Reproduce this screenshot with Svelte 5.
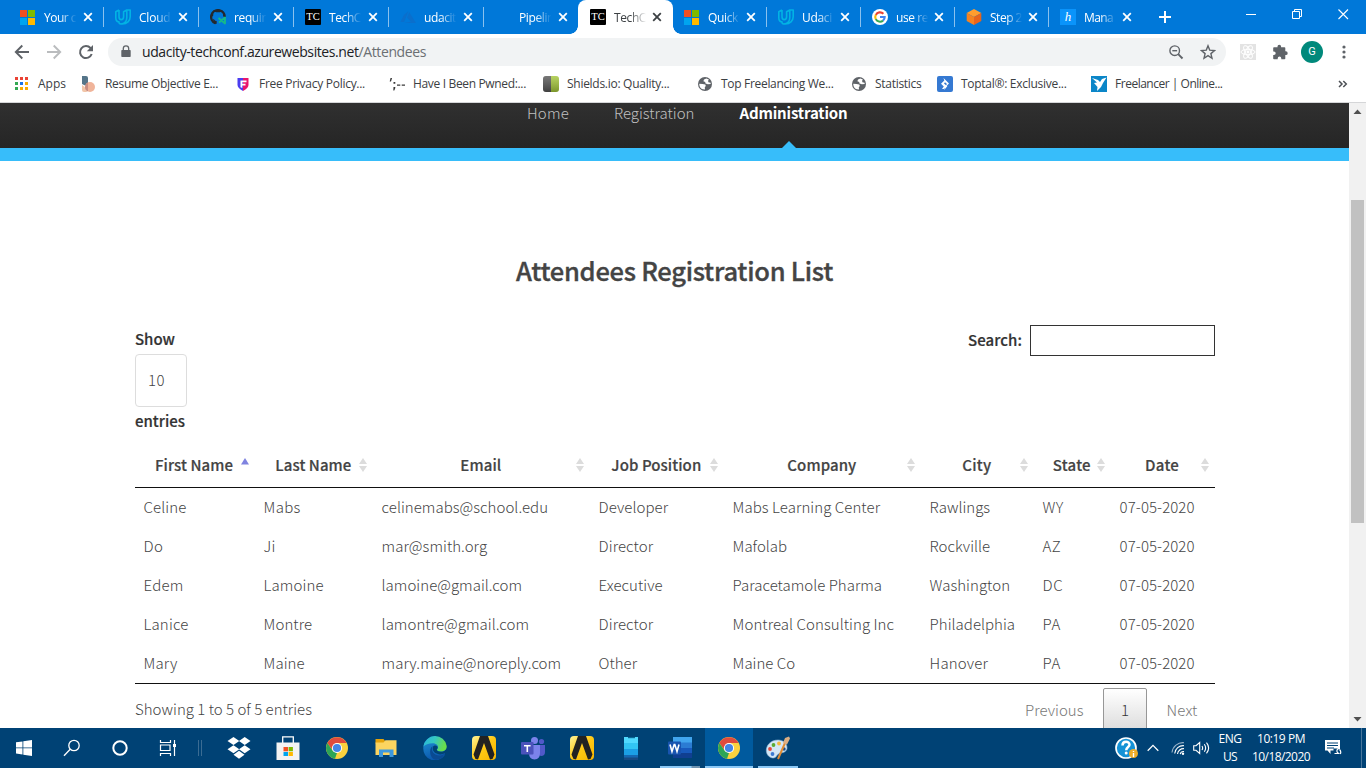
<script>
  // Spreads the glyphs of a label evenly over the given width.
  function fit(node, width) {
    const apply = (w) => {
      if (!w) return;
      node.style.letterSpacing = '0px';
      const natural = node.getBoundingClientRect().width;
      node.style.letterSpacing = (w - natural) / node.textContent.length + 'px';
    };
    apply(width);
    return { update: apply };
  }

  const tabs = [
    { icon: 'ms', text: 'Your c', w: 32, size: 95 },
    { icon: 'udacity', text: 'Cloud', w: 31.5, size: 95 },
    { icon: 'github', text: 'requir', w: 32, size: 95 },
    { icon: 'tc', text: 'TechC', w: 32, size: 95 },
    { icon: 'azure', text: 'udacit', w: 32, size: 95 },
    { icon: '', text: 'Pipelin', w: 35, size: 95 },
    { icon: 'tc', text: 'TechC', w: 32, size: 94.5, active: true },
    { icon: 'ms', text: 'Quick', w: 30, size: 93.5 },
    { icon: 'udacity', text: 'Udaci', w: 30, size: 94 },
    { icon: 'google', text: 'use re', w: 32, size: 94 },
    { icon: 'cube', text: 'Step 2', w: 32, size: 94 },
    { icon: 'honey', text: 'Mana', w: 29, size: 94 }
  ];

  const bookmarks = [
    { icon: 'apps', text: 'Apps', w: 28, size: 68 },
    { icon: 'resume', text: 'Resume Objective E...', w: 113, size: 154 },
    { icon: 'privacy', text: 'Free Privacy Policy...', w: 106, size: 154 },
    { icon: 'pwned', text: 'Have I Been Pwned:...', w: 113, size: 154 },
    { icon: 'shields', text: 'Shields.io: Quality...', w: 102.5, size: 154 },
    { icon: 'globe', text: 'Top Freelancing We...', w: 112.5, size: 154 },
    { icon: 'globe', text: 'Statistics', w: 46.5, size: 86 },
    { icon: 'toptal', text: 'Toptal®: Exclusive...', w: 105.5, size: 154 },
    { icon: 'freelancer', text: 'Freelancer | Online...', w: 107.5, size: 154 }
  ];

  const columns = [
    { name: 'First Name', w: 78, size: 120.6 },
    { name: 'Last Name', w: 76, size: 118 },
    { name: 'Email', w: 41, size: 217 },
    { name: 'Job Position', w: 90, size: 134 },
    { name: 'Company', w: 69, size: 197 },
    { name: 'City', w: 29, size: 113 },
    { name: 'State', w: 38, size: 77 },
    { name: 'Date', w: 34, size: 103.4 }
  ];

  const rows = [
    [['Celine', 43], ['Mabs', 37], ['celinemabs@school.edu', 166.5], ['Developer', 69.5], ['Mabs Learning Center', 147.5], ['Rawlings', 60.5], ['WY', 21], ['07-05-2020', 75]],
    [['Do', 20], ['Ji', 12], ['mar@smith.org', 105.5], ['Director', 54.5], ['Mafolab', 54.5], ['Rockville', 60.5], ['AZ', 18.5], ['07-05-2020', 75]],
    [['Edem', 40], ['Lamoine', 60], ['lamoine@gmail.com', 140.5], ['Executive', 64], ['Paracetamole Pharma', 149.5], ['Washington', 80.5], ['DC', 20.5], ['07-05-2020', 75]],
    [['Lanice', 45], ['Montre', 48.5], ['lamontre@gmail.com', 147.5], ['Director', 54.5], ['Montreal Consulting Inc', 161.5], ['Philadelphia', 85.5], ['PA', 18.5], ['07-05-2020', 75]],
    [['Mary', 34], ['Maine', 41], ['mary.maine@noreply.com', 179.5], ['Other', 38.5], ['Maine Co', 62.5], ['Hanover', 58.5], ['PA', 18.5], ['07-05-2020', 75]]
  ];

  const system = ['start', 'search', 'cortana', 'taskview'];
  const pinned = [
    { icon: 'dropbox' }, { icon: 'store' }, { icon: 'chrome' }, { icon: 'explorer' },
    { icon: 'edge' }, { icon: 'arrowA' }, { icon: 'teams' }, { icon: 'arrowA' },
    { icon: 'phone' }, { icon: 'word', state: 'stacked' }, { icon: 'chrome', state: 'focused' },
    { icon: 'paint', state: 'open' }
  ];
</script>

{#snippet icon(name, s = 16)}
  {#if name === 'ms'}
    <svg width={s} height={s} viewBox="0 0 16 16"><path fill="#f25022" d="M0 1h7v7H0z"/><path fill="#7fba00" d="M8 1h7v7H8z"/><path fill="#00a4ef" d="M0 9h7v7H0z"/><path fill="#ffb900" d="M8 9h7v7H8z"/></svg>
  {:else if name === 'udacity'}
    <svg width={s} height={s} viewBox="0 0 16 16" fill="none" stroke="#02b3e4" stroke-width="1.6" stroke-linejoin="round"><path d="M4 1 .8 2.700v6.300c0 2.400 1.500 3.900 3.700 3.900M4 1v6.800c0 1.700.7 2.800 2.200 2.800s2.400-1.100 2.400-2.800V2.700L11.800 1v7.400c0 3.700-2.200 6.200-6 6.600-1.500-.2-2-1-2-2.200M11.800 1h3.400v6.800c0 4-3.200 7-8 7.200"/></svg>
  {:else if name === 'github'}
    <svg width={s} height={s} viewBox="0 0 16 16"><path fill="none" stroke="#24292e" stroke-width="2.400" d="M5.300 14.200A6.800 6.800 0 1 1 14.800 8"/><path fill="#24292e" d="M3.300 6.500Q2.700 3.500 4 2.200l2.300 1h3.500l2.300-1Q13.500 3.500 13 6.500L14.500 8l.5-3-3-4H4L1.500 4v4zM3 10q1.200 0 2 1.600.8.700 1.700.2v2.700l-1 .8L3.500 13z"/><path fill="none" stroke="#16b88a" stroke-width="1.900" stroke-linejoin="round" d="m8.500 9 6.500 5.500v-6L9 13.500"/></svg>
  {:else if name === 'azure'}
    <svg width={s} height={s} viewBox="0 0 16 16" fill="#0a6fcc"><path d="M8.500 2 4 5.800.5 13h3.600zM9.200 3 7.100 8.500l3.800 4.200-7 1.300h12z"/></svg>
  {:else if name === 'tc'}
    <span class="tc">TC</span>
  {:else if name === 'google'}
    <svg width={s} height={s} viewBox="0 0 16 16"><circle cx="8" cy="8" r="8" fill="#fff"/><g fill="none" stroke-width="2.100"><path stroke="#ea4335" d="M3.800 5.900A4.700 4.700 0 0 1 11.400 4.800"/><path stroke="#fbbc05" d="M3.800 5.800a4.700 4.700 0 0 0 0 4.400"/><path stroke="#34a853" d="M3.800 10.100a4.700 4.700 0 0 0 7.200 1.500"/><path stroke="#4285f4" d="M8 8h4.700a4.700 4.700 0 0 1-1.700 3.600"/></g></svg>
  {:else if name === 'cube'}
    <svg width={s} height={s} viewBox="0 0 16 16"><path fill="#ff9d2e" d="m8 0 7.300 4L8 8 .7 4z"/><path fill="#f58220" d="M.7 4 8 8v8L.7 12z"/><path fill="#e8641b" d="M15.300 4 8 8v8l7.300-4z"/></svg>
  {:else if name === 'honey'}
    <span class="honey">h</span>
  {:else if name === 'apps'}
    <svg width="16" height="16" viewBox="0 0 16 16"><path fill="#ea4335" d="M2 1h3v3H2zM7 1h3v3H7zM12 1h3v3h-3z"/><path fill="#34a853" d="M2 6h3v3H2zM2 11h3v3H2z"/><path fill="#1a73e8" d="M7 6h3v3H7z"/><path fill="#f9ab00" d="M12 6h3v3h-3zM7 11h3v3H7zM12 11h3v3h-3z"/></svg>
  {:else if name === 'resume'}
    <svg width="16" height="16" viewBox="0 0 16 16"><path fill="#557589" d="M1 0h4q2 0 2 2v9l-6-3z"/><path fill="#f1c5a8" d="M1 9q4 2 5 7H3q-2 0-2-2z"/><circle cx="9" cy="11" r="5" fill="#f0b49a"/><path fill="#c78e83" d="M5 8q1-1 2-1.500v9Q4 14 4 11z"/></svg>
  {:else if name === 'privacy'}
    <svg width="16" height="16" viewBox="0 0 16 16"><path fill="#4b3df0" d="M2.500 2h5.500v13Q2.500 12 2.500 9z"/><path fill="#e9156b" d="M8 2h5.500v7q0 3-5.500 6z"/><path fill="#fff" d="M5.500 4.500h6v1.700H7.300v1.600h3.200v1.700H7.300V12l-1.800-.8z"/></svg>
  {:else if name === 'pwned'}
    <svg width="17" height="16" viewBox="0 0 17 16" fill="#3a3a3a"><path d="M1.500 2h1.600L2 5.500H.7zM4.500 6h1.800v1.800H4.500zM4.500 11h1.800v1l-1 2.500H4.300zM8 8.500h3.300v1.300H8zM12.700 8.500H16v1.300h-3.300z"/></svg>
  {:else if name === 'shields'}
    <svg width="16" height="16" viewBox="0 0 16 16"><defs><linearGradient id="sh" x2="0" y2="1"><stop stop-color="#fff" stop-opacity=".2"/><stop offset="1" stop-opacity=".25"/></linearGradient></defs><path fill="#555" d="M3 0h5v16H3q-3 0-3-3V3q0-3 3-3"/><path fill="#a4c639" d="M8 0h5q3 0 3 3v10q0 3-3 3H8z"/><rect width="16" height="16" rx="3" fill="url(#sh)"/></svg>
  {:else if name === 'globe'}
    <svg width="16" height="16" viewBox="0 0 16 16"><circle cx="8" cy="8" r="7" fill="#5f6368"/><path fill="#fff" d="M2.300 7.800 5.600 8l2.700.5.5 1.400-1 1.300.2 2.300Q3 13.500 2.300 9zM9.300 2.500 7 3.500l-.6 1.800 1.800.6.3 1.500 2.300.8 2.900-.2-.1-1.300-2.200-.4-.3-1.500.8-1.400z"/></svg>
  {:else if name === 'toptal'}
    <svg width="16" height="16" viewBox="0 0 16 16"><rect width="16" height="16" rx="2" fill="#3579d2"/><path fill="#fff" d="m6.500 2 5.500 5.500L6.700 13H5l1.800-2.500L4 7.800l3.300-3.200zM7 7.500 9 9.300l1-1.200-2-1.800zM8 11l1.500-1.500.8.800L7.200 14z"/></svg>
  {:else if name === 'freelancer'}
    <svg width="16" height="16" viewBox="0 0 16 16"><path fill="#0b86c8" d="M0 0h16v16H0z"/><path fill="#fff" d="m1 2 6 2 2 2 2-3 4.500-1.500L12 7l-2 4-4 4 .5-4L3 7l3-.5z"/></svg>
  {:else if name === 'start'}
    <svg width="16" height="16" viewBox="0 0 16 16" fill="#fff"><path d="m0 2.300 6.500-.9v6.100H0zM7.300 1.300 16 0v7.500H7.300zM0 8.300h6.500v6.200L0 13.600zM7.300 8.300H16V16l-8.700-1.300z"/></svg>
  {:else if name === 'search'}
    <svg width="18" height="18" viewBox="0 0 18 18" fill="none" stroke="#fff" stroke-width="1.300"><circle cx="11" cy="6.500" r="5.200"/><path d="m7.200 10.300-6.200 6.500"/></svg>
  {:else if name === 'cortana'}
    <svg width="18" height="18" viewBox="0 0 18 18" fill="none" stroke="#fff" stroke-width="2"><circle cx="9" cy="9" r="6.700"/></svg>
  {:else if name === 'taskview'}
    <svg width="18" height="16" viewBox="0 0 18 16" fill="none" stroke="#fff" stroke-width="1.200"><path d="M1.500 0v2.500h10V0M1.500 16v-2.500h10V16M1.500 5h9.500v5.500H1.500zM15.500 0v16"/><path fill="#fff" stroke="none" d="M14 4h3v3h-3z"/></svg>
  {:else if name === 'dropbox'}
    <svg width="24" height="24" viewBox="0 0 24 24" fill="#fff"><path d="m6.500 1 5.800 4-5.800 4L.5 5zM17.700 1l5.800 4-5.800 4-5.700-4zM6.500 9.300l5.800 4-5.800 4-6-4zM17.700 9.300l5.800 4-5.800 4-5.700-4zM12 14.700l5.500 4-5.500 4-5.500-4z"/></svg>
  {:else if name === 'store'}
    <svg width="24" height="24" viewBox="0 0 24 24"><path fill="none" stroke="#fff" stroke-width="1.300" d="M6.700 7V.8h10.600V7"/><path fill="#f3f3f3" d="M.5 6.500h23V24H.5z"/><path fill="#f25022" d="M7.500 11H12v4.300H7.500z"/><path fill="#7fba00" d="M12.600 11h4.300v4.300h-4.300z"/><path fill="#00a4ef" d="M7.500 16H12v4H7.500z"/><path fill="#ffb900" d="M12.600 16h4.300v4h-4.300z"/></svg>
  {:else if name === 'chrome'}
    <svg width="24" height="24" viewBox="0 0 24 24"><circle cx="12" cy="12" r="11" fill="#fbd23e"/><path fill="#df4b3e" d="M2.300 6.900A11 11 0 0 1 21.600 7H12l-4.500 7z"/><path fill="#2da556" d="M2.300 6.900 7.600 14.500 12 17l-2 5.800A11 11 0 0 1 2.300 6.900"/><circle cx="12" cy="12" r="5.100" fill="#fff"/><circle cx="12" cy="12" r="4.100" fill="#4285e8"/></svg>
  {:else if name === 'explorer'}
    <svg width="24" height="24" viewBox="0 0 24 24"><path fill="#e5a30b" d="M1.500 3h8l2 2.500-2 2h-8z"/><path fill="#fbd460" d="M1.500 6.500h8l2-2.200h11V19h-21z"/><path fill="#3d99dd" d="M5 13.500h14.500V21h-4v-4.500H9V21H5z"/></svg>
  {:else if name === 'edge'}
    <svg width="24" height="24" viewBox="0 0 24 24"><defs><linearGradient id="eg" x1="0" y1="0" x2="1" y2=".3"><stop stop-color="#29b5dc"/><stop offset=".5" stop-color="#35c8c2"/><stop offset="1" stop-color="#69dc4b"/></linearGradient><linearGradient id="eb" x2=".3" y2="1"><stop stop-color="#2196d8"/><stop offset="1" stop-color="#0b58ad"/></linearGradient></defs><path fill="url(#eb)" d="M.3 12A11.700 11.700 0 0 1 12 .3L22 14l-.5 5.500A11.700 11.700 0 0 1 .3 12"/><path fill="url(#eg)" d="M.5 10.500A11.700 11.700 0 0 1 23.700 10c.3 4-2.700 5.500-5.700 5.500-2.500 0-4-.8-4-1.800 0-.6 1-1 1-2.800 0-2-2.500-3.700-5.300-3.700C5.500 7.200 2 8.600.5 10.500"/><path fill="#0a4a92" d="M9.500 10c-2 5 2 9.500 6.500 9.500 2.300 0 4-.7 5.500-1.500C19 23 15 23.800 12.500 23.700 6.500 22.500 5.500 13 9.500 10"/><path fill="#004275" d="M12 9.600c1.800 0 2.700 1 2.600 2.200-.1 1-.8 1.300-.8 2 0 1 1.700 2 4.200 2 2 0 3.600-.5 5.500-2-.4 3.500-2.900 4.600-6.200 4.600-4 0-7.600-2.500-7.600-5.800 0-1.800.9-3 2.300-3"/></svg>
  {:else if name === 'arrowA'}
    <svg width="24" height="24" viewBox="0 0 24 24"><defs><linearGradient id="ya" x2="1" y2="1"><stop stop-color="#fff49a"/><stop offset=".5" stop-color="#ffc915"/><stop offset="1" stop-color="#f7b500"/></linearGradient></defs><rect width="24" height="24" rx="4" fill="url(#ya)"/><path fill="#222" d="M8 0h8l6.500 18.500L20.500 23l-2.500.5L12 7 6 23.500 3.500 23l-2-4.500z"/></svg>
  {:else if name === 'teams'}
    <svg width="24" height="24" viewBox="0 0 24 24"><circle cx="20.500" cy="5.500" r="2.600" fill="#5059c9"/><path fill="#5059c9" d="M16 9h8v7q0 4-4 4-2 0-4-3z"/><circle cx="13.500" cy="4.500" r="3.500" fill="#7b83eb"/><path fill="#7b83eb" d="M8 9h11v8q0 6-5.500 6.500Q8 23 8 17z"/><rect y="6" width="12.500" height="12.500" rx="1" fill="#4b53bc"/><path fill="#fff" d="M3 9h6.600v1.500H7.100V16H5.500v-5.500H3z"/></svg>
  {:else if name === 'phone'}
    <svg width="24" height="24" viewBox="0 0 24 24"><path fill="#50d9ff" d="M5 1h14v6H5z"/><path fill="#32c5f4" d="M5 7h14v6H5z"/><path fill="#1b9fe5" d="M5 13h14v6H5z"/><path fill="#1568b2" d="M5 19h14v3H5z"/><path fill="#174a82" d="M5 21.500h14V24H5z"/><path fill="#0a6592" d="M9 1h7v1.200H9z"/></svg>
  {:else if name === 'word'}
    <svg width="24" height="24" viewBox="0 0 24 24"><path fill="#41a5ee" d="M5 1h19v6H5z"/><path fill="#2b7cd3" d="M5 6.500h19V12H5z"/><path fill="#185abd" d="M5 12h19v5H5z"/><path fill="#103f91" d="M5 17h19v5H5z"/><rect y="5.500" width="13" height="13" rx="1" fill="#1854b0"/><path fill="none" stroke="#fff" stroke-width="1.600" d="m2 8.500 2 7 2.200-7h.6l2.200 7 2-7"/></svg>
  {:else if name === 'paint'}
    <svg width="26" height="24" viewBox="0 0 26 24"><path fill="#d4e7f5" stroke="#8db6d5" stroke-width=".6" d="M13 4C5 4 1 10 1.300 15c.3 4.500 4 7 7 7 3.500 0 3-3.500 6-4.500 3-1 7-1 7.700-5C22.500 7.500 18 4 13 4"/><circle cx="5" cy="13" r="1.900" fill="#e44b3c"/><circle cx="8.500" cy="9" r="1.900" fill="#5aab33"/><circle cx="14" cy="7.500" r="1.900" fill="#f5b83d"/><circle cx="7.500" cy="18" r="1.900" fill="#3e7bd1"/><circle cx="19" cy="13" r="1.700" fill="#234c82"/><path stroke="#e08b33" stroke-width="2" d="M13 23 20 7"/><path fill="#dcae82" d="m18 7 2-5 4-1.500 1 2-3 6z"/></svg>
  {/if}
{/snippet}

<div class="screen">
  <div class="tabbar">
    {#each tabs as tab, i}
      <div class="tab" class:active={tab.active} class:nosep={i === 0 || tab.active || tabs[i - 1]?.active} style:width="{tab.size}px">
        <span class="fav">{@render icon(tab.icon)}</span>
        <span class="tabtext"><span use:fit={tab.w}>{tab.text}</span></span>
        <svg class="close" width="10" height="10" viewBox="0 0 10 10"><path d="m1.200 1.200 7.600 7.600m0-7.600L1.200 8.800" fill="none" stroke="currentColor" stroke-width="1.800"/></svg>
      </div>
    {/each}
    <div class="newtab"><svg width="12" height="12" viewBox="0 0 12 12"><path d="M6 0v12M0 6h12" stroke="#fff" stroke-width="2"/></svg></div>
    <div class="wincontrols">
      <svg width="46" height="28" viewBox="0 0 46 28" fill="none" stroke="#fff"><path d="M17 14.500h10"/></svg>
      <svg width="46" height="28" viewBox="0 0 46 28" fill="none" stroke="#fff"><path d="M17.500 11.500h7v7h-7zM19.500 11V9.500h7v7H25"/></svg>
      <svg width="46" height="28" viewBox="0 0 46 28" fill="none" stroke="#fff" stroke-width="1.100"><path d="m17.500 9.500 9.500 9.500m0-9.500L17.500 19"/></svg>
    </div>
  </div>

  <div class="toolbar">
    <span class="tool"><svg width="16" height="16" viewBox="0 0 16 16" fill="none" stroke="#5f6368" stroke-width="1.900"><path d="M15 8H2.500M8.300 1.500 1.800 8l6.500 6.500"/></svg></span>
    <span class="tool"><svg width="16" height="16" viewBox="0 0 16 16" fill="none" stroke="#babcbe" stroke-width="1.900"><path d="M1 8h12.500M7.700 1.500 14.200 8l-6.500 6.500"/></svg></span>
    <span class="tool"><svg width="16" height="16" viewBox="0 0 16 16" fill="none" stroke="#5f6368" stroke-width="2"><path d="M13.700 10A6 6 0 1 1 12.500 4L14 5.500"/><path fill="#5f6368" stroke="none" d="M15 1v6.200H8.800z"/></svg></span>
    <div class="omnibox">
      <svg class="lock" width="10" height="14" viewBox="0 0 10 14"><path fill="#5f6368" d="M1 5h8q.7 0 .7.700v5.600q0 .7-.7.700H1q-.7 0-.7-.7V5.700Q.3 5 1 5"/><path fill="none" stroke="#5f6368" stroke-width="1.300" d="M2.300 5V3.500a2.700 2.700 0 0 1 5.400 0V5"/></svg>
      <span class="url"><span use:fit={216.5}>udacity-techconf.azurewebsites.net</span><span class="path" use:fit={67.5}>/Attendees</span></span>
      <span class="tool end"><svg width="16" height="16" viewBox="0 0 16 16" fill="none" stroke="#5f6368" stroke-width="1.400"><circle cx="6.700" cy="6.700" r="4.800"/><path d="M4.300 6.700h4.800"/><path stroke-width="1.900" d="m10.200 10.200 4.300 4.300"/></svg></span>
      <span class="tool"><svg width="16" height="16" viewBox="0 0 16 16" fill="none" stroke="#5f6368" stroke-width="1.400"><path d="m8 1.800 1.700 4.300 4.800.4-3.600 3.100 1.100 4.700L8 11.700l-4 2.600 1.100-4.700L1.500 6.500l4.800-.4z"/></svg></span>
    </div>
    <span class="tool first"><svg width="16" height="16" viewBox="0 0 16 16"><path fill="#e3e3e3" d="M0 0h16v16H0z"/><g fill="none" stroke="#fff" stroke-width="1"><ellipse cx="8" cy="8" rx="7" ry="2.700"/><ellipse cx="8" cy="8" rx="7" ry="2.700" transform="rotate(60 8 8)"/><ellipse cx="8" cy="8" rx="7" ry="2.700" transform="rotate(120 8 8)"/></g><circle cx="8" cy="8" r="1.400" fill="#fff"/></svg></span>
    <span class="tool"><svg width="16" height="16" viewBox="0 0 16 16" fill="#5f6368"><path d="M2 3.200h3.500V2.500a1.800 1.800 0 0 1 3.600 0v.7h3.400q.8 0 .8.800v3.300h.5a1.900 1.900 0 0 1 0 3.800h-.5v3.300q0 .8-.8.800H9.300v-.8a1.800 1.800 0 0 0-3.600 0v.8H2q-.8 0-.8-.8v-3.300h.7a1.800 1.800 0 0 0 0-3.600h-.7V4q0-.8.8-.8"/></svg></span>
    <span class="tool"><span class="avatar">G</span></span>
    <span class="tool"><svg width="4" height="14" viewBox="0 0 4 14" fill="#5f6368"><circle cx="2" cy="2" r="1.600"/><circle cx="2" cy="7" r="1.600"/><circle cx="2" cy="12" r="1.600"/></svg></span>
  </div>

  <div class="bookmarks">
    {#each bookmarks as b, i}
      <div class="bookmark" style:width="{b.size}px">
        <span class="fav" class:wide={i === 0}>{@render icon(b.icon)}</span>
        <span class="btext" use:fit={b.w}>{b.text}</span>
      </div>
    {/each}
    <svg class="more" width="10" height="8" viewBox="0 0 10 8" fill="none" stroke="#4d5156" stroke-width="1.500"><path d="m1 1 3 3-3 3M5.300 1l3 3-3 3"/></svg>
  </div>

  <div class="viewport">
    <main>
      <nav>
        <a class="home" href="#home"><span use:fit={42}>Home</span></a>
        <a class="reg" href="#registration"><span use:fit={80.5}>Registration</span></a>
        <a class="current" href="#administration"><span use:fit={108}>Administration</span></a>
      </nav>
      <div class="band"></div>
      <h1><span use:fit={317}>Attendees Registration List</span></h1>
      <section>
        <div class="controls">
          <div class="length">
            <span class="lab"><span use:fit={40}>Show</span></span>
            <span class="select"><span use:fit={17}>10</span></span>
            <span class="lab low"><span use:fit={50}>entries</span></span>
          </div>
          <label class="search"><span class="lift" use:fit={54}>Search:</span><input type="text" /></label>
        </div>
        <table>
          <colgroup>{#each columns as c}<col style:width="{c.size}px" />{/each}</colgroup>
          <thead>
            <tr>
              {#each columns as c, i}
                <th><div class="head"><span class="name"><span use:fit={c.w}>{c.name}</span></span>
                  <svg width="8" height="14" viewBox="0 0 8 14">
                    {#if i === 0}<path fill="#7f83e0" d="M4 0 8 6.500H0z"/>{:else}<path fill="#dcdcdc" d="M4 0 8 6H0zM0 8h8l-4 6z"/>{/if}
                  </svg></div></th>
              {/each}
            </tr>
          </thead>
          <tbody>
            {#each rows as row}
              <tr>{#each row as [text, w]}<td><span use:fit={w}>{text}</span></td>{/each}</tr>
            {/each}
          </tbody>
        </table>
        <div class="footer">
          <span class="info"><span use:fit={177}>Showing 1 to 5 of 5 entries</span></span>
          <span class="page muted prev"><span use:fit={58.5}>Previous</span></span>
          <span class="page here">1</span>
          <span class="page muted next"><span use:fit={31}>Next</span></span>
        </div>
      </section>
    </main>
    <div class="scrollbar">
      <svg width="17" height="17" viewBox="0 0 17 17"><path fill="#505050" d="M4.500 11h8l-4-4.500z"/></svg>
      <div class="thumb"></div>
      <svg class="down" width="17" height="17" viewBox="0 0 17 17"><path fill="#505050" d="M4.500 6h8l-4 4.500z"/></svg>
    </div>
  </div>

  <div class="taskbar">
    {#each system as s}<span class="sys">{@render icon(s)}</span>{/each}
    <span class="divider"></span>
    {#each pinned as p}<span class="pin {p.state ?? ''}">{@render icon(p.icon)}</span>{/each}
    <div class="tray">
      <span class="ti help"><svg width="24" height="24" viewBox="0 0 24 24"><circle cx="11" cy="12" r="10" fill="#1592d6" stroke="#fff" stroke-width="1.700"/><path fill="none" stroke="#fff" stroke-width="2.500" d="M7.500 9.500c0-5 7-4.500 7-.8 0 2.300-3.300 2.300-3.300 5.600"/><circle cx="11.200" cy="17" r="1.500" fill="#fff"/><circle cx="18.500" cy="17.500" r="4.500" fill="#f0ad28"/><path stroke="#fff" stroke-width="1.400" d="M18.500 15v1m0 1v4"/></svg></span>
      <span class="ti chev"><svg width="12" height="8" viewBox="0 0 12 8" fill="none" stroke="#fff" stroke-width="1.300"><path d="m.7 6.700 5.300-5.300 5.300 5.300"/></svg></span>
      <span class="ti wifi"><svg width="14" height="14" viewBox="0 0 14 14" fill="none" stroke="#fff" stroke-width="1.100"><path stroke="#9ab3c9" d="M1 11.500A11 11 0 0 1 13 1.700"/><path d="M3.700 12.500A8.500 8.500 0 0 1 13 4.700M6.500 13A6 6 0 0 1 13 7.700M9.200 13.200A3.500 3.500 0 0 1 13 10.500"/><circle cx="12" cy="12.700" r="1.200" fill="#fff" stroke="none"/></svg></span>
      <span class="ti vol"><svg width="17" height="14" viewBox="0 0 17 14" fill="none" stroke="#fff" stroke-width="1.100"><path d="M.7 4.700H3L6.700 1.500v11L3 9.300H.7zM9 5q1.300 2 0 4M11.300 3.300q2.700 3.700 0 7.400M13.500 1.700q4.300 5.300 0 10.600"/></svg></span>
      <span class="lang"><span use:fit={23}>ENG</span><span use:fit={14}>US</span></span>
      <span class="clock"><span use:fit={48}>10:19 PM</span><span use:fit={58}>10/18/2020</span></span>
      <span class="ti note"><svg width="18" height="18" viewBox="0 0 18 18"><path fill="#fff" d="M1 1h15v10.500H6.500V15L3.500 11.500H1z"/><path stroke="#004275" d="M3 4h11M3 6.500h11M3 9h7"/><path fill="#004275" d="M9.500 9.500H18V17H9.500z"/><path fill="none" stroke="#fff" stroke-width="1.200" d="M16 9.500c-4-.5-4 5-.5 5M10.500 14.500h4M15.500 10.500q2 2 .8 4.500"/></svg></span>
      <span class="peek"></span>
    </div>
  </div>
</div>

<style>
  :global(body) { background: #fff; overflow: hidden; }
  .screen { width: 1366px; height: 768px; display: flex; flex-direction: column; overflow: hidden; font-family: "Open Sans", "Noto Sans", sans-serif; background: #fff; }
  .screen * { box-sizing: border-box; }
  svg { display: block; flex: none; }
  span { white-space: nowrap; }

  .tabbar { height: 34px; background: #0078d9; display: flex; padding-left: 8px; flex: none; font-size: 12px; color: #fff; }
  .tab { height: 34px; display: flex; align-items: center; padding-left: 12px; flex: none; background: linear-gradient(#8ac1ee, #8ac1ee) 0 7px / 1px 20px no-repeat; position: relative; }
  .tab.nosep { background: none; }
  .tab.active { background: #fff; color: #3c4043; border-radius: 8px 8px 0 0; }
  .tab.active + .tab { padding-left: 11.500px; }
  .tab.active::before, .tab.active::after { content: ""; position: absolute; bottom: 0; width: 8px; height: 8px; }
  .tab.active::before { left: -8px; background: radial-gradient(circle at 0 0, transparent 7.500px, #fff 8px); }
  .tab.active::after { right: -8px; background: radial-gradient(circle at 100% 0, transparent 7.500px, #fff 8px); }
  .fav { width: 16px; height: 16px; margin-right: 8px; flex: none; }
  .wide { margin-right: 9px; }
  .tabtext { width: 36px; overflow: hidden; -webkit-mask-image: linear-gradient(90deg, #000 45%, transparent 90%); mask-image: linear-gradient(90deg, #000 45%, transparent 90%); }
  .close { margin-left: 3px; }
  .active .close { margin-left: 2px; }
  .active ~ .tab .close { margin-left: 1.500px; }
  .tc { display: flex; width: 16px; height: 16px; background: #000; color: #fff; font: 10.500px/16px "Liberation Serif", serif; justify-content: center; border-radius: 1px; }
  .honey { display: flex; width: 16px; height: 16px; background: #0a94fb; color: #fff; font: italic 13px/16px "Liberation Serif", serif; justify-content: center; }
  .newtab { display: flex; align-items: center; margin-left: 17px; }
  .wincontrols { display: flex; margin: 0 -1px 0 auto; }

  .toolbar { height: 36px; display: flex; align-items: center; padding: 0 6px; flex: none; }
  .tool { width: 32px; height: 28px; display: flex; align-items: center; justify-content: center; flex: none; }
  .omnibox { height: 28px; margin-left: 6px; width: 1118px; border-radius: 14px; background: #f1f3f4; display: flex; align-items: center; padding-right: 2px; }
  .lock { margin: 0 11px 0 13px; }
  .url { font-size: 14px; color: #202124; padding-bottom: 1px; }
  .path { color: #6b6f73; }
  .end { margin-left: auto; }
  .first { margin-left: 6px; }
  .avatar { width: 22px; height: 22px; border-radius: 50%; background: #00897b; color: #fff; font: 11px/22px Roboto, sans-serif; text-align: center; }

  .bookmarks { height: 33px; display: flex; align-items: center; padding: 0 0 4px 13px; font-size: 12px; color: #3c4043; border-bottom: 1px solid #d5d6d8; flex: none; }
  .bookmark { display: flex; align-items: center; flex: none; }
  .btext { padding-bottom: 1px; }
  .more { margin: 0 18px 0 auto; }

  .viewport { height: 625px; display: flex; flex: none; overflow: hidden; font-family: "Source Sans Pro", "Noto Sans CJK SC", sans-serif; }
  main { width: 1349px; color: #444; font-size: 15px; font-weight: 300; }
  nav { height: 45px; background: linear-gradient(#303030, #252525); display: flex; line-height: 20px; padding-left: 527px; }
  nav a { color: #c0c0c0; text-decoration: none; }
  .home { width: 87px; }
  .reg { width: 125.500px; }
  nav .current { color: #fff; font-weight: 700; position: relative; width: 108px; }
  .current::after { content: ""; position: absolute; left: 42.500px; bottom: 0; border: 7px solid transparent; border-top: 0; border-bottom-color: #37bdfa; }
  .band { height: 13px; background: #37bdfa; }
  h1 { margin: 0; height: 164px; padding-top: 89px; line-height: 40px; font-size: 25.500px; font-weight: 500; text-align: center; color: #444; -webkit-text-stroke: .35px #444; }
  section { width: 1080px; margin-left: 135px; }
  .controls { display: flex; justify-content: space-between; height: 117px; }
  .length { display: flex; flex-direction: column; align-items: flex-start; }
  .lab, .search { font-weight: 500; color: #333; -webkit-text-stroke: .2px #333; }
  .lab { height: 29px; line-height: 28px; }
  .low { line-height: 28px; }
  .select { width: 52px; height: 53px; border: 1px solid #ddd; border-radius: 4px; padding-left: 12px; line-height: 49px; color: #444; }
  .search { display: flex; align-items: center; height: 31px; }
  .lift { padding-bottom: 2px; }
  .search input { width: 185px; height: 31px; margin: 0 0 0 8px; border: 1px solid #333; outline: 0; }
  table { width: 1080px; table-layout: fixed; border-collapse: separate; border-spacing: 0; border-bottom: 1px solid #111; }
  th { height: 46px; padding: 0; border-bottom: 1px solid #111; font-weight: 500; -webkit-text-stroke: .2px #444; }
  .head { display: flex; align-items: center; padding-right: 6.500px; }
  .name { flex: 1; text-align: center; padding-left: 12px; line-height: 22px; }
  td { height: 39px; padding: 0 0 2px 8px; line-height: 24px; }
  td:first-child { padding-left: 8.500px; }
  .footer { display: flex; align-items: flex-start; height: 44px; padding-top: 4px; }
  .info { line-height: 41px; margin-right: auto; }
  .page { height: 44px; line-height: 43px; text-align: center; }
  .muted { color: #777; }
  .prev { width: 98px; text-align: left; padding-left: 20px; }
  .here { width: 44px; border: 1px solid #979797; border-radius: 2px; background: linear-gradient(#fff, #dcdcdc); color: #333; line-height: 42px; }
  .next { width: 68px; text-align: left; padding-left: 19.500px; }
  .scrollbar { width: 17px; background: #f1f1f1; display: flex; flex-direction: column; }
  .thumb { width: 13px; height: 323px; margin: 80px 0 0 2px; background: #c1c1c1; }
  .down { margin-top: auto; }

  .taskbar { height: 40px; background: #004275; display: flex; flex: none; color: #fff; }
  .sys { width: 48px; display: flex; align-items: center; justify-content: center; }
  .divider { width: 4px; height: 16px; margin: 12px 13px 0 6px; border: solid #3b6c93; border-width: 0 1px; }
  .pin { width: 48px; margin-right: 1px; display: flex; align-items: center; justify-content: center; }
  .focused { background: #005a9e linear-gradient(#8cc8f5, #8cc8f5) 0 38px / 48px 2px no-repeat; }
  .open { background: linear-gradient(#8cc8f5, #8cc8f5) 4px 38px / 40px 2px no-repeat; }
  .stacked { background: linear-gradient(90deg, #8cc8f5 31px, #6f93b0 32px) 4px 38px / 40px 2px no-repeat; }
  .tray { display: flex; align-items: center; margin-left: auto; font-size: 12px; line-height: 18px; }
  .ti { display: flex; justify-content: center; align-items: center; }
  .help { width: 26px; }
  .chev { width: 26px; }
  .wifi { width: 24px; }
  .vol { width: 23px; }
  .lang { width: 34px; display: flex; flex-direction: column; align-items: center; }
  .clock { width: 68px; display: flex; flex-direction: column; align-items: center; }
  .note { width: 36px; margin-right: 10px; }
  .peek { width: 5px; height: 40px; border-left: 1px solid #48769c; }
</style>
